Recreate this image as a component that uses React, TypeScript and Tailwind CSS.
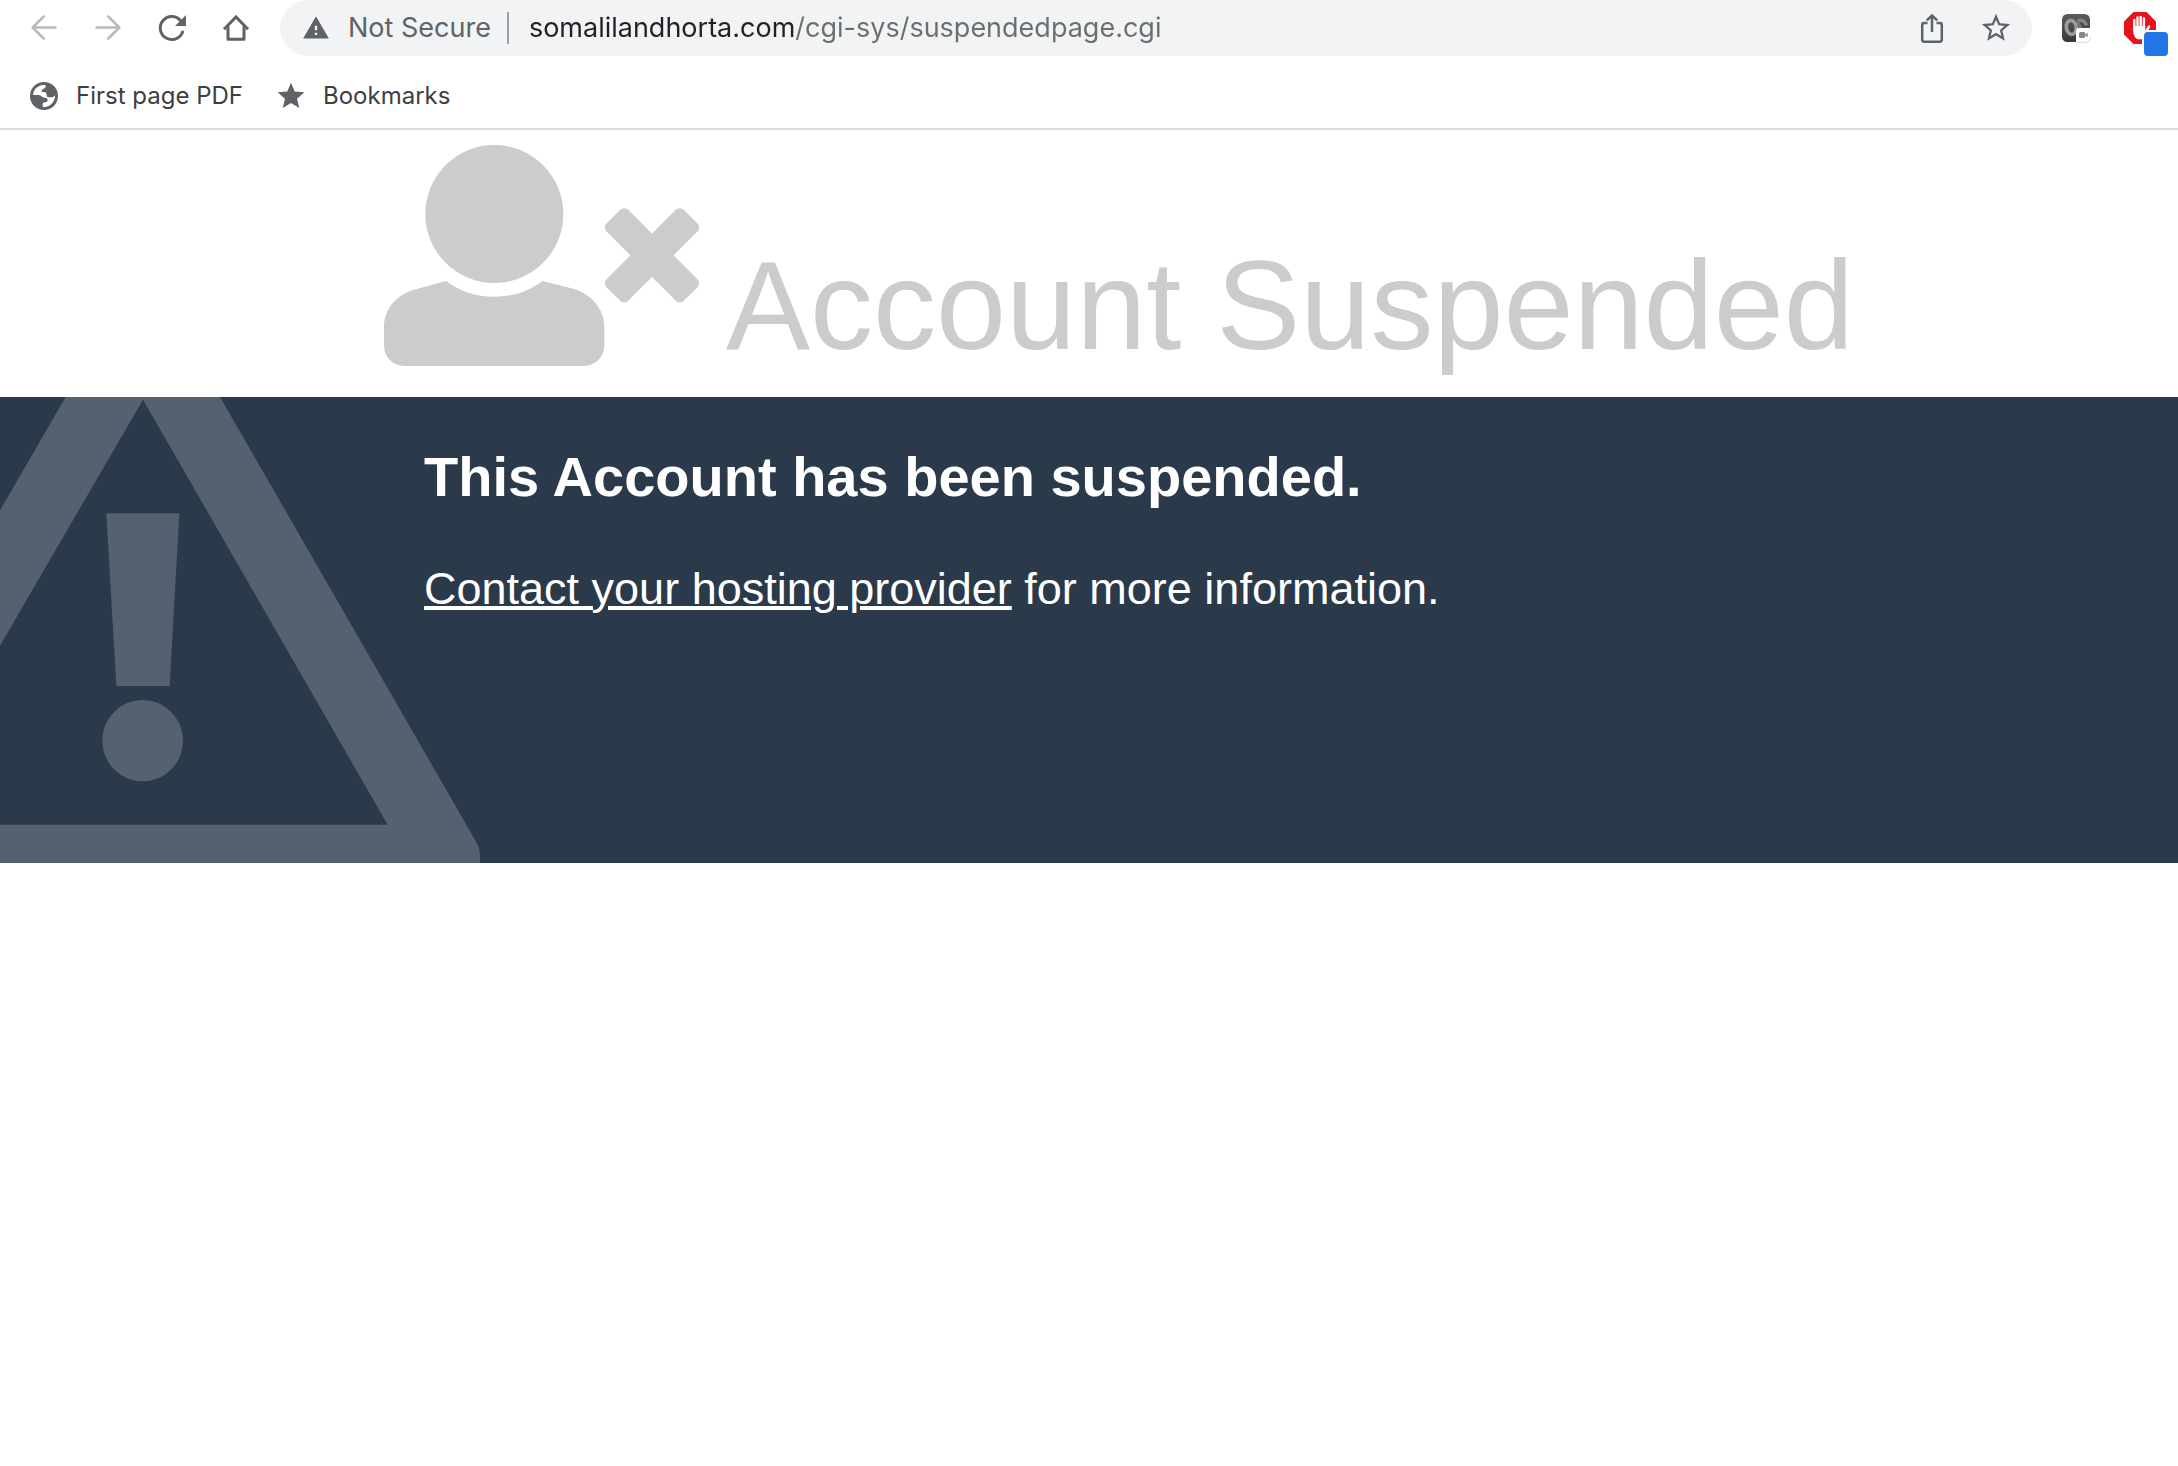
import type { ReactNode } from "react";
import { MdStar, MdStarBorder, MdWarning } from "react-icons/md";

function IconButton({ label, className = "", children }: { label: string; className?: string; children: ReactNode }) {
  return (
    <button aria-label={label} className={`flex size-8 shrink-0 items-center justify-center ${className}`}>
      {children}
    </button>
  );
}

function BackIcon() {
  return (
    <svg viewBox="0 0 32 32" className="size-8" fill="none" stroke="currentColor" strokeWidth="2.7" strokeLinecap="round" strokeLinejoin="round">
      <path d="M27.5 15.5H5M15.8 4.4L4.7 15.5l11.1 11.1" />
    </svg>
  );
}

function ForwardIcon() {
  return (
    <svg viewBox="0 0 32 32" className="size-8" fill="none" stroke="currentColor" strokeWidth="2.7" strokeLinecap="round" strokeLinejoin="round">
      <path d="M4.5 15.5H27M16.2 4.4l11.1 11.1-11.1 11.1" />
    </svg>
  );
}

function ReloadIcon() {
  return (
    <svg viewBox="0 0 32 32" className="size-8">
      <path d="M26.6 20A11.5 11.5 0 1 1 24.4 8.4" fill="none" stroke="currentColor" strokeWidth="3" strokeLinecap="round" />
      <path d="M30 3v11H19z" fill="currentColor" />
    </svg>
  );
}

function HomeIcon() {
  return (
    <svg viewBox="0 0 32 32" className="size-8" fill="none" stroke="currentColor" strokeWidth="3" strokeLinejoin="round">
      <path d="M4 17.2L16 5l12 12.2" strokeLinejoin="miter" />
      <path d="M8 14v13.2h16V14" />
    </svg>
  );
}

function ShareIcon() {
  return (
    <svg viewBox="0 0 32 32" className="size-8" fill="none" stroke="currentColor" strokeWidth="2.5">
      <path d="M16 20V4M10.8 8.4L16 3.4l5.2 5" />
      <path d="M11.5 11H8.2Q6.2 11 6.2 13V27.6Q6.2 29.8 8.2 29.8H23.8Q25.8 29.8 25.8 27.6V13Q25.8 11 23.8 11H20.5" />
    </svg>
  );
}

function GlobeIcon() {
  return (
    <svg viewBox="-6 -6 96 96" className="size-8">
      <circle cx="42" cy="42" r="42" fill="#5f6368" />
      <path
        d="M9 39C10 23 23 10 40 9L47 10Q48 19 39 21Q35 22 35 30H43Q50 31 50 38Q50 46 58 46H68Q72 45 75 40C76 58 62 75 43 75L38 74V67Q38 61 44 61Q53 61 53 53Q53 47 44 47Q36 46 33 41Q30 39 25 39Z"
        fill="#fff"
      />
    </svg>
  );
}

function RecorderIcon() {
  return (
    <svg viewBox="-6 -6 96 96" className="size-8">
      <defs>
        <linearGradient id="recorder" x1="0" y1="0" x2="0" y2="1">
          <stop offset="0" stopColor="#5c5c5c" />
          <stop offset="1" stopColor="#383838" />
        </linearGradient>
      </defs>
      <rect width="84" height="84" rx="16" fill="url(#recorder)" />
      <path d="M46 20Q66 14 74 34" fill="none" stroke="#858585" strokeWidth="10" />
      <path d="M46 22Q52 34 58 44" fill="none" stroke="#777" strokeWidth="8" />
      <ellipse cx="28" cy="40" rx="15" ry="21" transform="rotate(-8 28 40)" fill="none" stroke="#9a9a9a" strokeWidth="11" />
      <path d="M42 50Q42 42 50 42H86V72Q86 86 72 86H42Z" fill="#fff" />
      <path d="M42 85H70Q85 85 85 70" fill="none" stroke="#c4c4c4" strokeWidth="2" />
      <rect x="51" y="54" width="19" height="18" rx="5" fill="#868686" />
      <path d="M68 63l9-7v14z" fill="#868686" />
    </svg>
  );
}

function AdblockIcon() {
  return (
    <svg viewBox="0 0 44 44" className="size-11">
      <path d="M9.4 0h13.2L32 9.4v13.2L22.6 32H9.4L0 22.6V9.4z" fill="#e4131c" />
      <g stroke="#fff" strokeWidth="2.4" strokeLinecap="round" fill="none">
        <path d="M10.3 8v10M13.5 5.4v12M16.7 5v12M19.9 6.4v12M25 14.6l-4 7" />
      </g>
      <path d="M9 14h12.2v5l2.4-2q-1.2 5-3.2 8-1.6 2.4-4.4 2.4-4 0-5.4-3Q9 21.6 9 18z" fill="#fff" />
      <rect x="18" y="18" width="28" height="28" rx="4" fill="#fff" />
      <rect x="20" y="20" width="24" height="24" rx="4" fill="#2277e6" />
    </svg>
  );
}

function Toolbar() {
  return (
    <nav className="flex h-14 items-center pr-2.5 pl-7 text-[#5f6368]">
      <div className="flex gap-8 pr-7">
        <IconButton label="Back" className="text-[#bababb]">
          <BackIcon />
        </IconButton>
        <IconButton label="Forward" className="text-[#bababb]">
          <ForwardIcon />
        </IconButton>
        <IconButton label="Reload">
          <ReloadIcon />
        </IconButton>
        <IconButton label="Home">
          <HomeIcon />
        </IconButton>
      </div>
      <div className="flex h-14 flex-1 items-center rounded-full bg-[#f1f3f4] pr-5 pl-[22px]">
        <MdWarning className="size-7 shrink-0" />
        <span className="ml-[18px] shrink-0 text-[27px]">Not Secure</span>
        <span className="mr-5 ml-4 h-8 w-0.5 shrink-0 bg-[#9aa0a6]" />
        <input
          aria-label="Address"
          defaultValue="somalilandhorta.com/cgi-sys/suspendedpage.cgi"
          className="h-10 min-w-0 flex-1 bg-linear-to-r from-[#202124] from-[267px] to-[#6b6e70] to-[267px] bg-clip-text text-[27px] text-transparent outline-none"
        />
        <div className="flex gap-8">
          <IconButton label="Share">
            <ShareIcon />
          </IconButton>
          <IconButton label="Bookmark this page">
            <MdStarBorder className="size-[34px] shrink-0" />
          </IconButton>
        </div>
      </div>
      <div className="flex h-full gap-8 pl-7">
        <IconButton label="Screen recorder" className="self-center">
          <RecorderIcon />
        </IconButton>
        <button aria-label="Ad blocker" className="size-11 shrink-0 self-end">
          <AdblockIcon />
        </button>
      </div>
    </nav>
  );
}

function BookmarksBar() {
  return (
    <div className="flex h-[74px] items-center gap-8 border-b-2 border-[#dadcdc] pt-2 pl-7 text-2xl text-[#3c4043]">
      <a href="#" className="flex items-center gap-4">
        <GlobeIcon />
        First page PDF
      </a>
      <a href="#" className="flex items-center gap-4">
        <MdStar className="size-8 text-[#5f6368]" />
        Bookmarks
      </a>
    </div>
  );
}

function UserTimesIcon() {
  return (
    <svg viewBox="72 75 948 663" className="h-[221px] w-[316px] shrink-0" fill="currentColor">
      <circle cx="403" cy="282" r="207" />
      <path d="M72 622C72 565 112 521 170 507L258 483C300 514 345 530 403 530C461 530 506 514 547 483L634 505C692 520 733 565 733 622V676C733 711 705 738 672 738H133C99 738 72 711 72 676Z" />
      <g transform="rotate(45 876 406)">
        <rect x="712" y="360" width="328" height="92" rx="17" />
        <rect x="830" y="242" width="92" height="328" rx="17" />
      </g>
    </svg>
  );
}

function WarningBackdrop() {
  return (
    <svg viewBox="0 0 1440 1398" className="absolute top-0 left-0 h-[466px] w-[480px]" fill="#55616f">
      <path d="M197 0H660L1430 1337Q1440 1354 1440 1378V1398H0V1283H1163L429 8 0 746V340Z" />
      <path d="M319 349H538L509 867H349Z" />
      <ellipse cx="428" cy="1031" rx="121" ry="122" />
    </svg>
  );
}

export default function App() {
  return (
    <div className="min-h-screen bg-white font-[Inter,sans-serif]">
      <Toolbar />
      <BookmarksBar />
      <main className="font-['Liberation_Sans',Arial,sans-serif]">
        <h1 className="flex items-end gap-[26px] pt-[15px] pb-[31px] pl-[384px] text-[126px] leading-[120px] text-[#ccc]">
          <UserTimesIcon />
          Account Suspended
        </h1>
        <section className="relative min-h-[466px] bg-[#2b3a4a] pt-12 pl-[424px] text-white">
          <WarningBackdrop />
          <h2 className="text-[56px] leading-16 font-bold">This Account has been suspended.</h2>
          <p className="mt-13 text-[45px] leading-14">
            <a href="#" className="underline decoration-4">
              Contact your hosting provider
            </a>{" "}
            for more information.
          </p>
        </section>
      </main>
    </div>
  );
}
